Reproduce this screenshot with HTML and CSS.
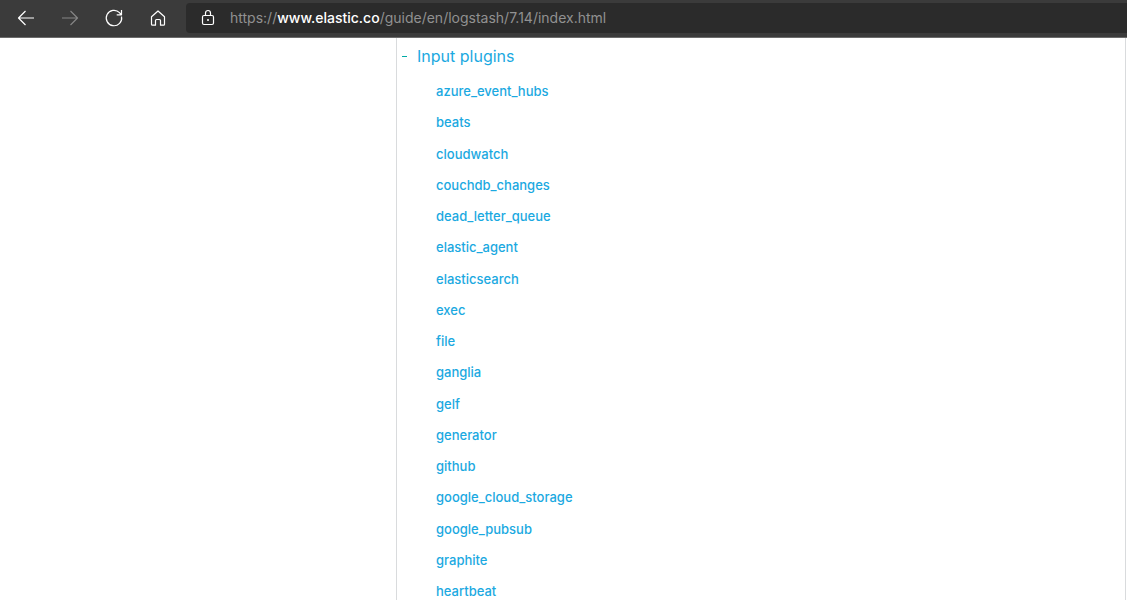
FILE: index.html
```html
<!DOCTYPE html>
<html lang="en">
<head>
<meta charset="utf-8">
<title>Logstash Reference [7.14] | Elastic</title>
<link rel="stylesheet" href="styles.css">
</head>
<body>
<header class="toolbar">
  <nav class="tools" aria-label="Browser">
    <button class="tool" type="button" aria-label="Back"><svg viewBox="0 0 20 20"><path d="M18 10H2.5M9.5 3L2.5 10l7 7"/></svg></button>
    <button class="tool" type="button" aria-label="Forward" disabled><svg viewBox="0 0 20 20"><path d="M2 10h15.500M10.500 3l7 7-7 7"/></svg></button>
    <button class="tool" type="button" aria-label="Reload"><svg viewBox="0 0 20 20"><path d="M17.500 8.500A7.700 7.700 0 1 1 15.500 4.700L17 6.500M17.500 2v4.800h-4.800"/></svg></button>
    <button class="tool" type="button" aria-label="Home"><svg viewBox="0 0 20 20"><path d="M3.500 8.800L10 3l6.500 5.800v7.400q0 1-1 1h-3v-4.700q0-1-1-1h-3q-1 0-1 1v4.700h-3q-1 0-1-1z"/></svg></button>
  </nav>
  <div class="address">
    <button class="lock" type="button" aria-label="Site information"><svg viewBox="0 0 20 20"><rect x="4.500" y="7.500" width="11" height="9" rx="1.500"/><path d="M7.500 7.500V5a2.500 2.500 0 0 1 5 0v2.500"/><circle class="dot" cx="10" cy="12" r="1"/></svg></button>
    <div class="url" role="textbox" contenteditable="true" spellcheck="false" aria-label="Address">https://<span class="host">www.elastic.co</span>/guide/en/logstash/7.14/index.html</div>
  </div>
</header>
<main class="page">
  <section class="contents">
    <div class="heading">
      <button class="toggle" type="button" aria-label="Collapse Input plugins"></button>
      <a class="title" href="#input-plugins">Input plugins</a>
    </div>
    <ul class="plugins">
      <li><a href="#azure_event_hubs">azure_event_hubs</a></li>
      <li><a href="#beats">beats</a></li>
      <li><a href="#cloudwatch">cloudwatch</a></li>
      <li><a href="#couchdb_changes">couchdb_changes</a></li>
      <li><a href="#dead_letter_queue">dead_letter_queue</a></li>
      <li><a href="#elastic_agent">elastic_agent</a></li>
      <li><a href="#elasticsearch">elasticsearch</a></li>
      <li><a href="#exec">exec</a></li>
      <li><a href="#file">file</a></li>
      <li><a href="#ganglia">ganglia</a></li>
      <li><a href="#gelf">gelf</a></li>
      <li><a href="#generator">generator</a></li>
      <li><a href="#github">github</a></li>
      <li><a href="#google_cloud_storage">google_cloud_storage</a></li>
      <li><a href="#google_pubsub">google_pubsub</a></li>
      <li><a href="#graphite">graphite</a></li>
      <li><a href="#heartbeat">heartbeat</a></li>
    </ul>
  </section>
</main>
</body>
</html>
```

FILE: styles.css
```css
* { box-sizing: border-box; }

body {
  display: flex;
  flex-direction: column;
  min-height: 100vh;
  margin: 0;
  background: #fff;
  font-family: Inter, "Liberation Sans", sans-serif;
}

button {
  padding: 0;
  border: 0;
  background: none;
  color: inherit;
}

.toolbar {
  display: flex;
  padding: 3px 0 4px 16px;
  border-bottom: 1px solid #6b6b6b;
  background: #3b3b3b;
  color: #fff;
}

.tools {
  display: flex;
  align-items: center;
  gap: 24px;
  margin-right: 18px;
}

.tool,
.lock {
  display: flex;
  flex: none;
  width: 20px;
  height: 20px;
}

.tool:disabled { color: #858585; }

svg {
  width: 20px;
  height: 20px;
  fill: none;
  stroke: currentColor;
  stroke-width: 1.2;
  stroke-linejoin: round;
}

.dot {
  fill: currentColor;
  stroke: none;
}

.address {
  display: flex;
  flex: 1;
  align-items: center;
  gap: 12px;
  padding: 5px 12px;
  border-radius: 4px 0 0 4px;
  background: #2b2b2b;
}

.url {
  color: #919191;
  font-size: 14px;
  line-height: 20px;
  white-space: nowrap;
  outline: 0;
}

.host { color: #fff; font-weight: 500; }

.page {
  display: flex;
  flex: 1;
  padding: 0 1px 0 396px;
}

.contents {
  display: flex;
  flex: 1;
  flex-direction: column;
  padding: 6px 4px 0;
  border: solid #d9dbdd;
  border-width: 0 1px;
}

.heading {
  display: flex;
  align-items: center;
  gap: 8px;
}

.toggle {
  display: flex;
  align-items: center;
  width: 8px;
  height: 24px;
}

.toggle::before {
  width: 5px;
  height: 1px;
  margin-left: 1px;
  background: #00a9a5;
  content: "";
}

a {
  color: #1ba9e1;
  text-decoration: none;
}

.title {
  font-size: 16px;
  line-height: 24px;
}

.plugins {
  display: flex;
  flex: 1;
  flex-direction: column;
  justify-content: space-between;
  margin: 0;
  padding: 14px 0 0 35px;
  list-style: none;
  font-size: 13px;
  font-weight: 500;
  line-height: 18px;
}
```
